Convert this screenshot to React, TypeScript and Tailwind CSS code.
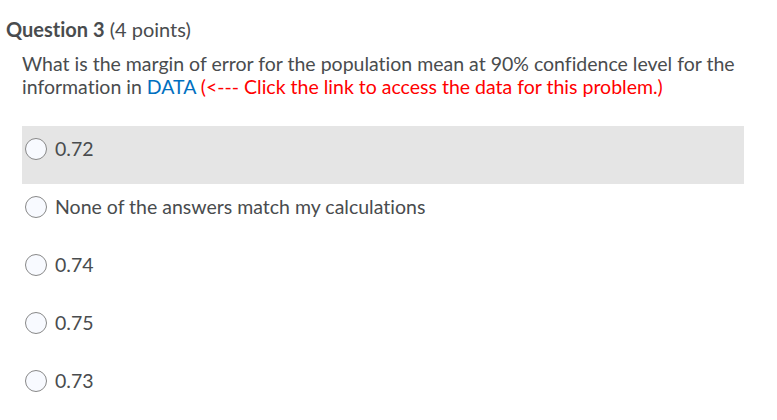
import React from "react";

const options = [
  { label: "0.72", hl: true },
  { label: "None of the answers match my calculations", hl: false },
  { label: "0.74", hl: false },
  { label: "0.75", hl: false },
  { label: "0.73", hl: false },
];

export default function App() {
  return (
    <div
      className="w-[777px] h-[420px] bg-white text-[#494c4e] overflow-hidden [font-variant-ligatures:none]"
      style={{ fontFamily: "Lato, 'Noto Sans', sans-serif" }}
    >
      <div className="pl-[6px] pt-[17px]">
        <div className="text-[20px] leading-[24px] whitespace-nowrap">
          <span className="font-bold">Question 3</span> (4 points)
        </div>
        <div className="ml-[16px] mt-[11px] w-[740px] text-[19.5px] leading-[23px]">
          What is the margin of error for the population mean at 90% confidence level for the
          <br />
          information in <span className="text-[#006fbf]">DATA</span>{" "}
          <span className="text-[#ff0000]">(&lt;--- Click the link to access the data for this problem.)</span>
        </div>
        <div className="ml-[16px] mt-[28px] w-[722px] flex flex-col">
          {options.map((o) => (
            <div
              key={o.label}
              className={`h-[58px] flex items-start pt-[11px] pl-[3px] ${o.hl ? "bg-[#e5e5e5]" : ""}`}
            >
              <span className="mt-[1px] w-[22px] h-[22px] rounded-full border border-[#888888] bg-[#f8faff] shrink-0" />
              <span className="ml-[8px] text-[19.5px] leading-[23px]">{o.label}</span>
            </div>
          ))}
        </div>
      </div>
    </div>
  );
}
